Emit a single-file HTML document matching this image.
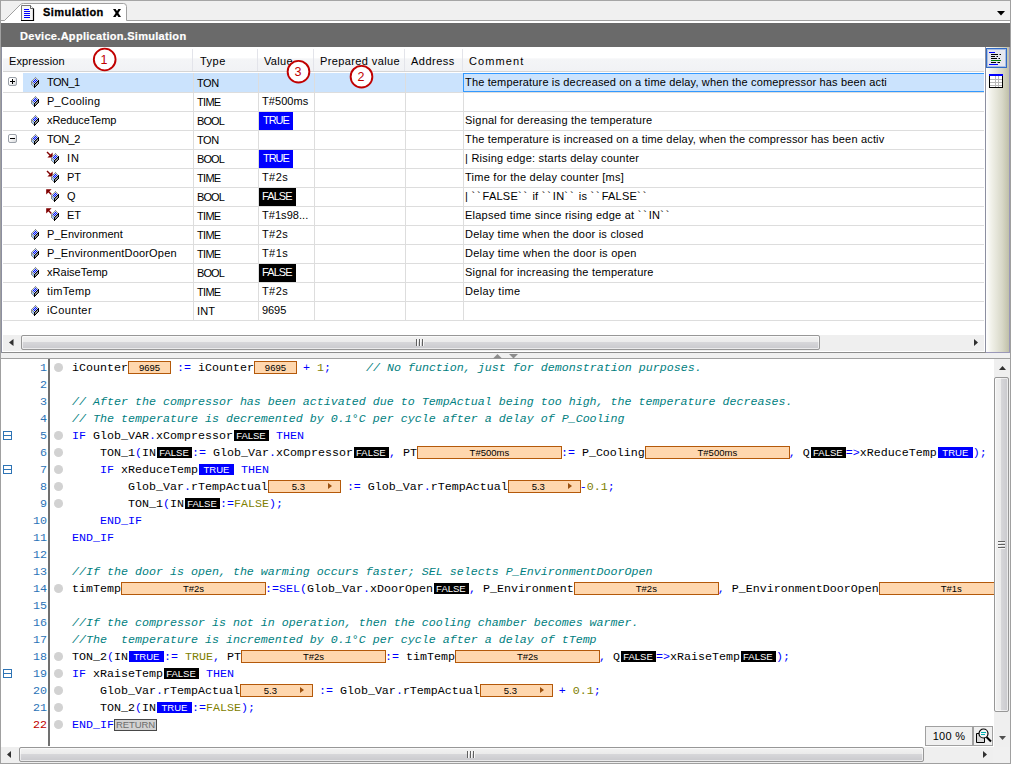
<!DOCTYPE html>
<html>
<head>
<meta charset="utf-8">
<title>Simulation</title>
<style>
html,body{margin:0;padding:0;}
body{width:1011px;height:764px;overflow:hidden;background:#fff;position:relative;font-family:"Liberation Sans",sans-serif;font-size:11px;color:#000;}
.a{position:absolute;}
#frame{position:absolute;left:0;top:0;width:1011px;height:764px;overflow:hidden;background:#fff;}
#tabstrip{left:0;top:0;width:1011px;height:21px;background:#f0f0f0;}
#topline{left:0;top:0;width:1011px;height:1px;background:#a5a5a5;}
#tabtext{left:43px;top:5px;font-weight:bold;font-size:11px;line-height:14px;white-space:nowrap;letter-spacing:0.45px;-webkit-text-stroke:0.3px #000;}
#whitegap{left:1px;top:21px;width:1010px;height:2px;background:#fff;}
#titlebar{left:1px;top:23px;width:1009px;height:24px;background:#6a6a6a;}
#titletext{left:20px;top:29px;color:#fff;font-weight:bold;font-size:11px;line-height:14px;white-space:nowrap;letter-spacing:0.3px;-webkit-text-stroke:0.2px #fff;}
#leftedge{left:0;top:0;width:1px;height:764px;background:#a0a0a0;}
#hdr{left:3px;top:49px;width:981px;height:22px;background:linear-gradient(#ffffff 0%,#ffffff 40%,#f4f5f7 45%,#f1f2f5 100%);}
#hdrline{left:3px;top:71px;width:981px;height:1px;background:#d5d5d5;}
.hsep{top:49px;width:1px;height:22px;background:#e3e4ea;}
.ht{top:54px;line-height:14px;font-size:11px;white-space:nowrap;color:#000;}
.rl{left:3px;width:981px;height:1px;background:#dddddd;}
.vl{top:73px;width:1px;height:248px;background:#dddddd;}
.t{line-height:14px;white-space:nowrap;font-size:11px;}
.vb{color:#fff;height:17px;line-height:17px;font-size:11px;text-align:left;padding-left:3px;box-sizing:border-box;white-space:nowrap;}
.tru{background:#0000ff;}
.fal{background:#000;}
.circ{width:23.6px;height:23.6px;box-sizing:border-box;border:1.9px solid #c00000;border-radius:50%;background:#fff;color:#c00000;font-size:12.5px;line-height:20.6px;text-align:center;text-indent:-1px;}
#code{left:0;top:359px;width:994px;height:387px;overflow:hidden;background:#fff;}
.ln{position:absolute;left:0;width:47px;text-align:right;font-family:"Liberation Mono",monospace;font-size:11.67px;line-height:17px;height:17px;color:#2b73b7;}
.cl{position:absolute;left:72px;white-space:pre;font-family:"Liberation Mono",monospace;font-size:11.67px;line-height:17px;height:17px;color:#000;}
.k{color:#0000ff;}
.c{color:#008080;font-style:italic;}
.n{color:#808000;}
.ib{display:inline-block;vertical-align:top;box-sizing:border-box;height:13px;margin-top:1px;margin-right:-1px;background:#ffd7ae;border:1px solid #b4590a;font-family:"Liberation Sans",sans-serif;font-size:9.5px;line-height:11px;text-align:center;color:#000;position:relative;font-style:normal;overflow:hidden;}
.ar{position:absolute;right:8px;top:2px;width:0;height:0;border-left:4.5px solid #9c4f0c;border-top:3.5px solid transparent;border-bottom:3.5px solid transparent;}
.bf,.bt{display:inline-block;vertical-align:top;box-sizing:border-box;height:11px;margin-top:2px;margin-left:1px;width:35px;font-family:"Liberation Sans",sans-serif;font-size:9.5px;line-height:12px;text-align:center;color:#fff;overflow:hidden;}
.bf{background:#000;text-indent:-1px;}
.bt{background:#0000ff;}
.rt{display:inline-block;vertical-align:top;box-sizing:border-box;height:12px;margin-top:2px;margin-right:-1px;width:43px;font-family:"Liberation Sans",sans-serif;font-size:9.5px;line-height:10px;text-align:center;color:#6c6c6c;background:#d2d2d2;border:1px solid #484848;overflow:hidden;letter-spacing:-0.1px;}
.dot{position:absolute;left:53.5px;width:9.5px;height:9px;border-radius:50%;background:#d2d2d2;}
.tri{position:absolute;width:0;height:0;}
</style>
</head>
<body>
<div id="frame">
<div class="a" id="tabstrip"></div><div class="a" id="topline"></div>
<div class="a" style="left:0;top:20px;width:1011px;height:1px;background:#a0a0a0"></div>
<svg class="a" style="left:0;top:0" width="140" height="22" viewBox="0 0 140 22"><path d="M1.5 20.5 L4.5 20.5 L20.5 4.5 Q21.5 3.5 23.5 3.5 L123.5 3.5 Q126.5 3.5 126.5 6.5 L126.5 21 L1.5 21 Z" fill="#ffffff"/><path d="M1 20.5 L4.5 20.5 L20.5 4.5 Q21.5 3.5 23.5 3.5 L123.5 3.5 Q126.5 3.5 126.5 6.5 L126.5 20.5" fill="none" stroke="#a0a0a0" stroke-width="1"/></svg>
<svg class="a" style="left:21px;top:5px" width="14" height="17" viewBox="0 0 14 17"><path d="M0.5 0.5 L9.5 0.5 L12.5 3.5 L12.5 15.5 L0.5 15.5 Z" fill="#f6f6f6" stroke="#6a6a6a" stroke-width="0.9"/><path d="M0 15.5 L13 15.5 M12.5 3.5 L12.5 16" stroke="#000" stroke-width="1.2"/><path d="M9.5 0.5 L9.5 3.5 L12.5 3.5" fill="#fff" stroke="#404040" stroke-width="0.8"/><path d="M3 4.5h5M3 6.5h6M3 8.5h6M3 10.5h6M3 12.5h6" stroke="#0000ff" stroke-width="1"/></svg>
<div class="a" id="tabtext">Simulation</div>
<svg class="a" style="left:113px;top:9px" width="8" height="8" viewBox="0 0 8 8"><path d="M0 0H2.6L8 8H5.4Z" fill="#000"/><path d="M8 0H5.4L0 8H2.6Z" fill="#000"/></svg>
<svg class="a" style="left:997px;top:11px" width="8" height="4.5" viewBox="0 0 8 4.5"><polygon points="0,0 8,0 4.0,4.5" fill="#000"/></svg>
<div class="a" id="whitegap"></div><div class="a" id="titlebar"></div><div class="a" id="titletext">Device.Application.Simulation</div>
<div class="a" id="hdr"></div><div class="a" id="hdrline"></div>
<div class="a hsep" style="left:192px"></div>
<div class="a hsep" style="left:257px"></div>
<div class="a hsep" style="left:313px"></div>
<div class="a hsep" style="left:404px"></div>
<div class="a hsep" style="left:462px"></div>
<div class="a ht" style="left:9px;letter-spacing:0.133px;">Expression</div>
<div class="a ht" style="left:200px;letter-spacing:0.467px;">Type</div>
<div class="a ht" style="left:264px;letter-spacing:0.3px;">Value</div>
<div class="a ht" style="left:320px;letter-spacing:0.385px;">Prepared value</div>
<div class="a ht" style="left:411px;letter-spacing:0.5px;">Address</div>
<div class="a ht" style="left:469px;letter-spacing:1.1px;">Comment</div>
<div class="a" style="left:23px;top:73px;width:961px;height:19px;background:#cbe3fd"></div>
<div class="a rl" style="top:92px"></div>
<div class="a rl" style="top:111px"></div>
<div class="a rl" style="top:130px"></div>
<div class="a rl" style="top:149px"></div>
<div class="a rl" style="top:168px"></div>
<div class="a rl" style="top:187px"></div>
<div class="a rl" style="top:206px"></div>
<div class="a rl" style="top:225px"></div>
<div class="a rl" style="top:244px"></div>
<div class="a rl" style="top:263px"></div>
<div class="a rl" style="top:282px"></div>
<div class="a rl" style="top:301px"></div>
<div class="a rl" style="top:320px"></div>
<div class="a vl" style="left:193px"></div>
<div class="a vl" style="left:258px"></div>
<div class="a vl" style="left:314px"></div>
<div class="a vl" style="left:405px"></div>
<div class="a vl" style="left:463px"></div>
<div class="a" style="left:463px;top:73px;width:521px;height:19px;box-sizing:border-box;border:1px solid #3399ff;border-right:none;background:#cbe3fd"></div>
<div class="a" style="left:8px;top:77px;width:9px;height:9px;box-sizing:border-box;border:1px solid #9aa0a8;border-radius:2px;background:linear-gradient(135deg,#fff 30%,#d8dadc)"></div><div class="a" style="left:10px;top:81px;width:5px;height:1px;background:#000"></div><div class="a" style="left:12px;top:79px;width:1px;height:5px;background:#000"></div>
<svg class="a" style="left:31px;top:77px" width="8" height="11" viewBox="0 0 8 11" shape-rendering="crispEdges"><path d="M4 0.5h1M3 1.5h1M5 1.5h1M2 2.5h1M6 2.5h1M1 3.5h1M0 4.5h1M0 5.5h2M0 6.5h1M2 6.5h1M0 7.5h1M1 8.5h1M2 9.5h1" stroke="#8e8e8e"/><path d="M4 1.5h1M3 2.5h1M5 2.5h1M2 3.5h1M4 3.5h1M6 3.5h1M1 4.5h1M3 4.5h1M5 4.5h1M2 5.5h1M4 5.5h1M3 6.5h1" stroke="#c4dcf4"/><path d="M4 2.5h1M3 3.5h1M5 3.5h1M2 4.5h1M4 4.5h1M3 5.5h1" stroke="#0000ff"/><path d="M7 3.5h1M6 4.5h2M5 5.5h1M7 5.5h1M4 6.5h1M7 6.5h1M3 7.5h1M6 7.5h1M3 8.5h1M5 8.5h1M3 9.5h2M3 10.5h1" stroke="#000000"/><path d="M1 6.5h1M1 7.5h2M2 8.5h1" stroke="#a6ccfc"/><path d="M6 5.5h1M5 6.5h2M4 7.5h2M4 8.5h1" stroke="#8c8c8c"/></svg>
<div class="a t" style="left:47px;top:75px;letter-spacing:-0.525px;">TON_1</div>
<div class="a t" style="left:197px;top:76px;letter-spacing:-0.4px;">TON</div>
<div class="a t" style="left:465px;top:75px;letter-spacing:0.156px;">The temperature is decreased on a time delay, when the comepressor has been acti</div>
<svg class="a" style="left:31px;top:96px" width="8" height="11" viewBox="0 0 8 11" shape-rendering="crispEdges"><path d="M4 0.5h1M3 1.5h1M5 1.5h1M2 2.5h1M6 2.5h1M1 3.5h1M0 4.5h1M0 5.5h2M0 6.5h1M2 6.5h1M0 7.5h1M1 8.5h1M2 9.5h1" stroke="#8e8e8e"/><path d="M4 1.5h1M3 2.5h1M5 2.5h1M2 3.5h1M4 3.5h1M6 3.5h1M1 4.5h1M3 4.5h1M5 4.5h1M2 5.5h1M4 5.5h1M3 6.5h1" stroke="#c4dcf4"/><path d="M4 2.5h1M3 3.5h1M5 3.5h1M2 4.5h1M4 4.5h1M3 5.5h1" stroke="#0000ff"/><path d="M7 3.5h1M6 4.5h2M5 5.5h1M7 5.5h1M4 6.5h1M7 6.5h1M3 7.5h1M6 7.5h1M3 8.5h1M5 8.5h1M3 9.5h2M3 10.5h1" stroke="#000000"/><path d="M1 6.5h1M1 7.5h2M2 8.5h1" stroke="#a6ccfc"/><path d="M6 5.5h1M5 6.5h2M4 7.5h2M4 8.5h1" stroke="#8c8c8c"/></svg>
<div class="a t" style="left:47px;top:94px;letter-spacing:0.288px;">P_Cooling</div>
<div class="a t" style="left:197px;top:95px;letter-spacing:-0.7px;">TIME</div>
<div class="a t" style="left:262px;top:94px;letter-spacing:0.067px;">T#500ms</div>
<svg class="a" style="left:31px;top:115px" width="8" height="11" viewBox="0 0 8 11" shape-rendering="crispEdges"><path d="M4 0.5h1M3 1.5h1M5 1.5h1M2 2.5h1M6 2.5h1M1 3.5h1M0 4.5h1M0 5.5h2M0 6.5h1M2 6.5h1M0 7.5h1M1 8.5h1M2 9.5h1" stroke="#8e8e8e"/><path d="M4 1.5h1M3 2.5h1M5 2.5h1M2 3.5h1M4 3.5h1M6 3.5h1M1 4.5h1M3 4.5h1M5 4.5h1M2 5.5h1M4 5.5h1M3 6.5h1" stroke="#c4dcf4"/><path d="M4 2.5h1M3 3.5h1M5 3.5h1M2 4.5h1M4 4.5h1M3 5.5h1" stroke="#0000ff"/><path d="M7 3.5h1M6 4.5h2M5 5.5h1M7 5.5h1M4 6.5h1M7 6.5h1M3 7.5h1M6 7.5h1M3 8.5h1M5 8.5h1M3 9.5h2M3 10.5h1" stroke="#000000"/><path d="M1 6.5h1M1 7.5h2M2 8.5h1" stroke="#a6ccfc"/><path d="M6 5.5h1M5 6.5h2M4 7.5h2M4 8.5h1" stroke="#8c8c8c"/></svg>
<div class="a t" style="left:47px;top:113px;letter-spacing:-0.1px;">xReduceTemp</div>
<div class="a t" style="left:197px;top:114px;letter-spacing:-0.9px;">BOOL</div>
<div class="a vb tru" style="left:259px;top:112px;width:34px;height:18px;line-height:17px;padding-left:4px;letter-spacing:-1.05px;">TRUE</div>
<div class="a t" style="left:465px;top:113px;letter-spacing:0.246px;">Signal for dereasing the temperature</div>
<div class="a" style="left:8px;top:134px;width:9px;height:9px;box-sizing:border-box;border:1px solid #9aa0a8;border-radius:2px;background:linear-gradient(135deg,#fff 30%,#d8dadc)"></div><div class="a" style="left:10px;top:138px;width:5px;height:1px;background:#000"></div>
<svg class="a" style="left:31px;top:134px" width="8" height="11" viewBox="0 0 8 11" shape-rendering="crispEdges"><path d="M4 0.5h1M3 1.5h1M5 1.5h1M2 2.5h1M6 2.5h1M1 3.5h1M0 4.5h1M0 5.5h2M0 6.5h1M2 6.5h1M0 7.5h1M1 8.5h1M2 9.5h1" stroke="#8e8e8e"/><path d="M4 1.5h1M3 2.5h1M5 2.5h1M2 3.5h1M4 3.5h1M6 3.5h1M1 4.5h1M3 4.5h1M5 4.5h1M2 5.5h1M4 5.5h1M3 6.5h1" stroke="#c4dcf4"/><path d="M4 2.5h1M3 3.5h1M5 3.5h1M2 4.5h1M4 4.5h1M3 5.5h1" stroke="#0000ff"/><path d="M7 3.5h1M6 4.5h2M5 5.5h1M7 5.5h1M4 6.5h1M7 6.5h1M3 7.5h1M6 7.5h1M3 8.5h1M5 8.5h1M3 9.5h2M3 10.5h1" stroke="#000000"/><path d="M1 6.5h1M1 7.5h2M2 8.5h1" stroke="#a6ccfc"/><path d="M6 5.5h1M5 6.5h2M4 7.5h2M4 8.5h1" stroke="#8c8c8c"/></svg>
<div class="a t" style="left:47px;top:132px;letter-spacing:-0.475px;">TON_2</div>
<div class="a t" style="left:197px;top:133px;letter-spacing:-0.4px;">TON</div>
<div class="a t" style="left:465px;top:132px;letter-spacing:0.178px;">The temperature is increased on a time delay, when the compressor has been activ</div>
<svg class="a" style="left:46px;top:149px" width="8" height="10" viewBox="0 0 8 10"><path d="M1 3 L5 7" stroke="#800000" stroke-width="1.4"/><path d="M6.6 3.4 L6.6 8.6 L1.4 8.6 Z" fill="#800000"/></svg>
<svg class="a" style="left:51px;top:153px" width="8" height="11" viewBox="0 0 8 11" shape-rendering="crispEdges"><path d="M4 0.5h1M3 1.5h1M5 1.5h1M2 2.5h1M6 2.5h1M1 3.5h1M0 4.5h1M0 5.5h2M0 6.5h1M2 6.5h1M0 7.5h1M1 8.5h1M2 9.5h1" stroke="#8e8e8e"/><path d="M4 1.5h1M3 2.5h1M5 2.5h1M2 3.5h1M4 3.5h1M6 3.5h1M1 4.5h1M3 4.5h1M5 4.5h1M2 5.5h1M4 5.5h1M3 6.5h1" stroke="#c4dcf4"/><path d="M4 2.5h1M3 3.5h1M5 3.5h1M2 4.5h1M4 4.5h1M3 5.5h1" stroke="#0000ff"/><path d="M7 3.5h1M6 4.5h2M5 5.5h1M7 5.5h1M4 6.5h1M7 6.5h1M3 7.5h1M6 7.5h1M3 8.5h1M5 8.5h1M3 9.5h2M3 10.5h1" stroke="#000000"/><path d="M1 6.5h1M1 7.5h2M2 8.5h1" stroke="#a6ccfc"/><path d="M6 5.5h1M5 6.5h2M4 7.5h2M4 8.5h1" stroke="#8c8c8c"/></svg>
<div class="a t" style="left:67px;top:151px;letter-spacing:1.0px;">IN</div>
<div class="a t" style="left:197px;top:152px;letter-spacing:-0.9px;">BOOL</div>
<div class="a vb tru" style="left:259px;top:150px;width:34px;height:18px;line-height:17px;padding-left:4px;letter-spacing:-1.05px;">TRUE</div>
<div class="a t" style="left:465px;top:151px;letter-spacing:0.232px;">| Rising edge: starts delay counter</div>
<svg class="a" style="left:46px;top:168px" width="8" height="10" viewBox="0 0 8 10"><path d="M1 3 L5 7" stroke="#800000" stroke-width="1.4"/><path d="M6.6 3.4 L6.6 8.6 L1.4 8.6 Z" fill="#800000"/></svg>
<svg class="a" style="left:51px;top:172px" width="8" height="11" viewBox="0 0 8 11" shape-rendering="crispEdges"><path d="M4 0.5h1M3 1.5h1M5 1.5h1M2 2.5h1M6 2.5h1M1 3.5h1M0 4.5h1M0 5.5h2M0 6.5h1M2 6.5h1M0 7.5h1M1 8.5h1M2 9.5h1" stroke="#8e8e8e"/><path d="M4 1.5h1M3 2.5h1M5 2.5h1M2 3.5h1M4 3.5h1M6 3.5h1M1 4.5h1M3 4.5h1M5 4.5h1M2 5.5h1M4 5.5h1M3 6.5h1" stroke="#c4dcf4"/><path d="M4 2.5h1M3 3.5h1M5 3.5h1M2 4.5h1M4 4.5h1M3 5.5h1" stroke="#0000ff"/><path d="M7 3.5h1M6 4.5h2M5 5.5h1M7 5.5h1M4 6.5h1M7 6.5h1M3 7.5h1M6 7.5h1M3 8.5h1M5 8.5h1M3 9.5h2M3 10.5h1" stroke="#000000"/><path d="M1 6.5h1M1 7.5h2M2 8.5h1" stroke="#a6ccfc"/><path d="M6 5.5h1M5 6.5h2M4 7.5h2M4 8.5h1" stroke="#8c8c8c"/></svg>
<div class="a t" style="left:67px;top:170px;">PT</div>
<div class="a t" style="left:197px;top:171px;letter-spacing:-0.7px;">TIME</div>
<div class="a t" style="left:262px;top:170px;letter-spacing:0.4px;">T#2s</div>
<div class="a t" style="left:465px;top:170px;letter-spacing:0.253px;">Time for the delay counter [ms]</div>
<svg class="a" style="left:46px;top:187px" width="8" height="10" viewBox="0 0 8 10"><path d="M2 4 L5.4 7.4" stroke="#800000" stroke-width="1.4"/><path d="M0.2 2.2 L5.6 2.2 L0.2 7.6 Z" fill="#800000"/></svg>
<svg class="a" style="left:51px;top:191px" width="8" height="11" viewBox="0 0 8 11" shape-rendering="crispEdges"><path d="M4 0.5h1M3 1.5h1M5 1.5h1M2 2.5h1M6 2.5h1M1 3.5h1M0 4.5h1M0 5.5h2M0 6.5h1M2 6.5h1M0 7.5h1M1 8.5h1M2 9.5h1" stroke="#8e8e8e"/><path d="M4 1.5h1M3 2.5h1M5 2.5h1M2 3.5h1M4 3.5h1M6 3.5h1M1 4.5h1M3 4.5h1M5 4.5h1M2 5.5h1M4 5.5h1M3 6.5h1" stroke="#c4dcf4"/><path d="M4 2.5h1M3 3.5h1M5 3.5h1M2 4.5h1M4 4.5h1M3 5.5h1" stroke="#0000ff"/><path d="M7 3.5h1M6 4.5h2M5 5.5h1M7 5.5h1M4 6.5h1M7 6.5h1M3 7.5h1M6 7.5h1M3 8.5h1M5 8.5h1M3 9.5h2M3 10.5h1" stroke="#000000"/><path d="M1 6.5h1M1 7.5h2M2 8.5h1" stroke="#a6ccfc"/><path d="M6 5.5h1M5 6.5h2M4 7.5h2M4 8.5h1" stroke="#8c8c8c"/></svg>
<div class="a t" style="left:67px;top:189px;">Q</div>
<div class="a t" style="left:197px;top:190px;letter-spacing:-0.9px;">BOOL</div>
<div class="a vb fal" style="left:259px;top:188px;width:37px;height:18px;line-height:17px;padding-left:3px;letter-spacing:-0.9px;">FALSE</div>
<div class="a t" style="left:465px;top:189px;letter-spacing:0.24px;">| <span style="letter-spacing:1.9px">``</span>FALSE<span style="letter-spacing:1.9px">``</span> if <span style="letter-spacing:1.9px">``</span>IN<span style="letter-spacing:1.9px">``</span> is <span style="letter-spacing:1.9px">``</span>FALSE<span style="letter-spacing:1.9px">``</span></div>
<svg class="a" style="left:46px;top:206px" width="8" height="10" viewBox="0 0 8 10"><path d="M2 4 L5.4 7.4" stroke="#800000" stroke-width="1.4"/><path d="M0.2 2.2 L5.6 2.2 L0.2 7.6 Z" fill="#800000"/></svg>
<svg class="a" style="left:51px;top:210px" width="8" height="11" viewBox="0 0 8 11" shape-rendering="crispEdges"><path d="M4 0.5h1M3 1.5h1M5 1.5h1M2 2.5h1M6 2.5h1M1 3.5h1M0 4.5h1M0 5.5h2M0 6.5h1M2 6.5h1M0 7.5h1M1 8.5h1M2 9.5h1" stroke="#8e8e8e"/><path d="M4 1.5h1M3 2.5h1M5 2.5h1M2 3.5h1M4 3.5h1M6 3.5h1M1 4.5h1M3 4.5h1M5 4.5h1M2 5.5h1M4 5.5h1M3 6.5h1" stroke="#c4dcf4"/><path d="M4 2.5h1M3 3.5h1M5 3.5h1M2 4.5h1M4 4.5h1M3 5.5h1" stroke="#0000ff"/><path d="M7 3.5h1M6 4.5h2M5 5.5h1M7 5.5h1M4 6.5h1M7 6.5h1M3 7.5h1M6 7.5h1M3 8.5h1M5 8.5h1M3 9.5h2M3 10.5h1" stroke="#000000"/><path d="M1 6.5h1M1 7.5h2M2 8.5h1" stroke="#a6ccfc"/><path d="M6 5.5h1M5 6.5h2M4 7.5h2M4 8.5h1" stroke="#8c8c8c"/></svg>
<div class="a t" style="left:67px;top:208px;">ET</div>
<div class="a t" style="left:197px;top:209px;letter-spacing:-0.7px;">TIME</div>
<div class="a t" style="left:262px;top:208px;letter-spacing:0.05px;">T#1s98...</div>
<div class="a t" style="left:465px;top:208px;letter-spacing:0.24px;">Elapsed time since rising edge at <span style="letter-spacing:1.9px">``</span>IN<span style="letter-spacing:1.9px">``</span></div>
<svg class="a" style="left:31px;top:229px" width="8" height="11" viewBox="0 0 8 11" shape-rendering="crispEdges"><path d="M4 0.5h1M3 1.5h1M5 1.5h1M2 2.5h1M6 2.5h1M1 3.5h1M0 4.5h1M0 5.5h2M0 6.5h1M2 6.5h1M0 7.5h1M1 8.5h1M2 9.5h1" stroke="#8e8e8e"/><path d="M4 1.5h1M3 2.5h1M5 2.5h1M2 3.5h1M4 3.5h1M6 3.5h1M1 4.5h1M3 4.5h1M5 4.5h1M2 5.5h1M4 5.5h1M3 6.5h1" stroke="#c4dcf4"/><path d="M4 2.5h1M3 3.5h1M5 3.5h1M2 4.5h1M4 4.5h1M3 5.5h1" stroke="#0000ff"/><path d="M7 3.5h1M6 4.5h2M5 5.5h1M7 5.5h1M4 6.5h1M7 6.5h1M3 7.5h1M6 7.5h1M3 8.5h1M5 8.5h1M3 9.5h2M3 10.5h1" stroke="#000000"/><path d="M1 6.5h1M1 7.5h2M2 8.5h1" stroke="#a6ccfc"/><path d="M6 5.5h1M5 6.5h2M4 7.5h2M4 8.5h1" stroke="#8c8c8c"/></svg>
<div class="a t" style="left:47px;top:227px;letter-spacing:0.05px;">P_Environment</div>
<div class="a t" style="left:197px;top:228px;letter-spacing:-0.7px;">TIME</div>
<div class="a t" style="left:262px;top:227px;letter-spacing:0.4px;">T#2s</div>
<div class="a t" style="left:465px;top:227px;letter-spacing:0.236px;">Delay time when the door is closed</div>
<svg class="a" style="left:31px;top:248px" width="8" height="11" viewBox="0 0 8 11" shape-rendering="crispEdges"><path d="M4 0.5h1M3 1.5h1M5 1.5h1M2 2.5h1M6 2.5h1M1 3.5h1M0 4.5h1M0 5.5h2M0 6.5h1M2 6.5h1M0 7.5h1M1 8.5h1M2 9.5h1" stroke="#8e8e8e"/><path d="M4 1.5h1M3 2.5h1M5 2.5h1M2 3.5h1M4 3.5h1M6 3.5h1M1 4.5h1M3 4.5h1M5 4.5h1M2 5.5h1M4 5.5h1M3 6.5h1" stroke="#c4dcf4"/><path d="M4 2.5h1M3 3.5h1M5 3.5h1M2 4.5h1M4 4.5h1M3 5.5h1" stroke="#0000ff"/><path d="M7 3.5h1M6 4.5h2M5 5.5h1M7 5.5h1M4 6.5h1M7 6.5h1M3 7.5h1M6 7.5h1M3 8.5h1M5 8.5h1M3 9.5h2M3 10.5h1" stroke="#000000"/><path d="M1 6.5h1M1 7.5h2M2 8.5h1" stroke="#a6ccfc"/><path d="M6 5.5h1M5 6.5h2M4 7.5h2M4 8.5h1" stroke="#8c8c8c"/></svg>
<div class="a t" style="left:47px;top:246px;letter-spacing:0.18px;">P_EnvironmentDoorOpen</div>
<div class="a t" style="left:197px;top:247px;letter-spacing:-0.7px;">TIME</div>
<div class="a t" style="left:262px;top:246px;letter-spacing:0.4px;">T#1s</div>
<div class="a t" style="left:465px;top:246px;letter-spacing:0.265px;">Delay time when the door is open</div>
<svg class="a" style="left:31px;top:267px" width="8" height="11" viewBox="0 0 8 11" shape-rendering="crispEdges"><path d="M4 0.5h1M3 1.5h1M5 1.5h1M2 2.5h1M6 2.5h1M1 3.5h1M0 4.5h1M0 5.5h2M0 6.5h1M2 6.5h1M0 7.5h1M1 8.5h1M2 9.5h1" stroke="#8e8e8e"/><path d="M4 1.5h1M3 2.5h1M5 2.5h1M2 3.5h1M4 3.5h1M6 3.5h1M1 4.5h1M3 4.5h1M5 4.5h1M2 5.5h1M4 5.5h1M3 6.5h1" stroke="#c4dcf4"/><path d="M4 2.5h1M3 3.5h1M5 3.5h1M2 4.5h1M4 4.5h1M3 5.5h1" stroke="#0000ff"/><path d="M7 3.5h1M6 4.5h2M5 5.5h1M7 5.5h1M4 6.5h1M7 6.5h1M3 7.5h1M6 7.5h1M3 8.5h1M5 8.5h1M3 9.5h2M3 10.5h1" stroke="#000000"/><path d="M1 6.5h1M1 7.5h2M2 8.5h1" stroke="#a6ccfc"/><path d="M6 5.5h1M5 6.5h2M4 7.5h2M4 8.5h1" stroke="#8c8c8c"/></svg>
<div class="a t" style="left:47px;top:265px;letter-spacing:0.022px;">xRaiseTemp</div>
<div class="a t" style="left:197px;top:266px;letter-spacing:-0.9px;">BOOL</div>
<div class="a vb fal" style="left:259px;top:264px;width:37px;height:18px;line-height:17px;padding-left:3px;letter-spacing:-0.9px;">FALSE</div>
<div class="a t" style="left:465px;top:265px;letter-spacing:0.225px;">Signal for increasing the temperature</div>
<svg class="a" style="left:31px;top:286px" width="8" height="11" viewBox="0 0 8 11" shape-rendering="crispEdges"><path d="M4 0.5h1M3 1.5h1M5 1.5h1M2 2.5h1M6 2.5h1M1 3.5h1M0 4.5h1M0 5.5h2M0 6.5h1M2 6.5h1M0 7.5h1M1 8.5h1M2 9.5h1" stroke="#8e8e8e"/><path d="M4 1.5h1M3 2.5h1M5 2.5h1M2 3.5h1M4 3.5h1M6 3.5h1M1 4.5h1M3 4.5h1M5 4.5h1M2 5.5h1M4 5.5h1M3 6.5h1" stroke="#c4dcf4"/><path d="M4 2.5h1M3 3.5h1M5 3.5h1M2 4.5h1M4 4.5h1M3 5.5h1" stroke="#0000ff"/><path d="M7 3.5h1M6 4.5h2M5 5.5h1M7 5.5h1M4 6.5h1M7 6.5h1M3 7.5h1M6 7.5h1M3 8.5h1M5 8.5h1M3 9.5h2M3 10.5h1" stroke="#000000"/><path d="M1 6.5h1M1 7.5h2M2 8.5h1" stroke="#a6ccfc"/><path d="M6 5.5h1M5 6.5h2M4 7.5h2M4 8.5h1" stroke="#8c8c8c"/></svg>
<div class="a t" style="left:47px;top:284px;letter-spacing:0.333px;">timTemp</div>
<div class="a t" style="left:197px;top:285px;letter-spacing:-0.7px;">TIME</div>
<div class="a t" style="left:262px;top:284px;letter-spacing:0.4px;">T#2s</div>
<div class="a t" style="left:465px;top:284px;letter-spacing:0.344px;">Delay time</div>
<svg class="a" style="left:31px;top:305px" width="8" height="11" viewBox="0 0 8 11" shape-rendering="crispEdges"><path d="M4 0.5h1M3 1.5h1M5 1.5h1M2 2.5h1M6 2.5h1M1 3.5h1M0 4.5h1M0 5.5h2M0 6.5h1M2 6.5h1M0 7.5h1M1 8.5h1M2 9.5h1" stroke="#8e8e8e"/><path d="M4 1.5h1M3 2.5h1M5 2.5h1M2 3.5h1M4 3.5h1M6 3.5h1M1 4.5h1M3 4.5h1M5 4.5h1M2 5.5h1M4 5.5h1M3 6.5h1" stroke="#c4dcf4"/><path d="M4 2.5h1M3 3.5h1M5 3.5h1M2 4.5h1M4 4.5h1M3 5.5h1" stroke="#0000ff"/><path d="M7 3.5h1M6 4.5h2M5 5.5h1M7 5.5h1M4 6.5h1M7 6.5h1M3 7.5h1M6 7.5h1M3 8.5h1M5 8.5h1M3 9.5h2M3 10.5h1" stroke="#000000"/><path d="M1 6.5h1M1 7.5h2M2 8.5h1" stroke="#a6ccfc"/><path d="M6 5.5h1M5 6.5h2M4 7.5h2M4 8.5h1" stroke="#8c8c8c"/></svg>
<div class="a t" style="left:47px;top:303px;letter-spacing:0.429px;">iCounter</div>
<div class="a t" style="left:197px;top:304px;letter-spacing:0.1px;">INT</div>
<div class="a t" style="left:262px;top:303px;letter-spacing:-0.067px;">9695</div>
<svg class="a" style="left:90px;top:45px" width="30" height="30" viewBox="0 0 30 30"><circle cx="14.7" cy="14.5" r="10.85" fill="#fff" stroke="#c00000" stroke-width="1.9"/><text x="14.1" y="18.9" text-anchor="middle" font-family="Liberation Sans, sans-serif" font-size="12.5" fill="#c00000">1</text></svg>
<svg class="a" style="left:347px;top:62px" width="30" height="30" viewBox="0 0 30 30"><circle cx="14.5" cy="14.7" r="10.85" fill="#fff" stroke="#c00000" stroke-width="1.9"/><text x="13.9" y="19.1" text-anchor="middle" font-family="Liberation Sans, sans-serif" font-size="12.5" fill="#c00000">2</text></svg>
<svg class="a" style="left:284px;top:57px" width="30" height="30" viewBox="0 0 30 30"><circle cx="14.5" cy="14.7" r="10.85" fill="#fff" stroke="#c00000" stroke-width="1.9"/><text x="13.9" y="19.1" text-anchor="middle" font-family="Liberation Sans, sans-serif" font-size="12.5" fill="#c00000">3</text></svg>
<div class="a" style="left:985px;top:47px;width:1px;height:306px;background:#8c8fa0"></div>
<div class="a" style="left:1px;top:47px;width:1px;height:306px;background:#8c8fa0"></div>
<div class="a" style="left:986px;top:47px;width:23px;height:305px;background:linear-gradient(90deg,#ffffff 0%,#f0f0e8 25%,#d8d8c8 70%,#c0c0a8 100%)"></div>
<div class="a" style="left:1009px;top:47px;width:1px;height:306px;background:#9a98b8"></div>
<div class="a" style="left:986px;top:352px;width:24px;height:1px;background:#9a98b8"></div>
<div class="a" style="left:986px;top:48px;width:21px;height:20px;box-sizing:border-box;border:1px solid #316ac5;background:#e6e7ef;box-shadow:inset 0 0 0 1px rgba(90,138,216,.45)"></div>
<svg class="a" style="left:988px;top:50px" width="16" height="16" viewBox="0 0 16 16"><path d="M1 2.5h6" stroke="#0000ff" stroke-width="1"/><path d="M3 4.5h7M11.5 4.5h1.5" stroke="#000" stroke-width="1"/><path d="M3 6.5h4M8.5 6.5h1.5" stroke="#000" stroke-width="1"/><path d="M3 8.5h6M10.5 8.5h1.5" stroke="#000" stroke-width="1"/><path d="M3 10.5h10" stroke="#008000" stroke-width="1"/><path d="M3 12.5h5M9.5 12.5h2.5" stroke="#000" stroke-width="1"/><path d="M1 14.5h9" stroke="#0000ff" stroke-width="1"/></svg>
<svg class="a" style="left:989px;top:74px" width="14" height="14" viewBox="0 0 14 14"><rect x="0.5" y="0.5" width="13" height="13" fill="#fff" stroke="#000" stroke-width="1"/><rect x="0" y="0" width="14" height="2" fill="#0000ff"/><path d="M1 5.5h12M1 8.5h12M1 11.5h12M6.5 2v11M9.5 2v11" stroke="#b8b8b8" stroke-width="1"/></svg>
<div class="a" style="left:3px;top:335px;width:981px;height:16px;background:#efefef"></div>
<svg class="a" style="left:9px;top:339px" width="4.5" height="7" viewBox="0 0 4.5 7"><polygon points="4.5,0 4.5,7 0,3.5" fill="#303030"/></svg>
<svg class="a" style="left:974px;top:339px" width="4" height="7" viewBox="0 0 4 7"><polygon points="0,0 0,7 4,3.5" fill="#303030"/></svg>
<div class="a" style="left:21px;top:335px;width:799px;height:15px;box-sizing:border-box;border:1px solid #979797;border-radius:2px;background:linear-gradient(#f2f2f2 0%,#ebebeb 45%,#d6d6d9 50%,#c9c9cd 100%);box-shadow:inset 0 0 0 1px rgba(255,255,255,.6)"></div><div class="a" style="left:416px;top:339px;width:1px;height:7px;background:#606060"></div><div class="a" style="left:417px;top:339px;width:1px;height:7px;background:#f8f8f8"></div><div class="a" style="left:419px;top:339px;width:1px;height:7px;background:#606060"></div><div class="a" style="left:420px;top:339px;width:1px;height:7px;background:#f8f8f8"></div><div class="a" style="left:422px;top:339px;width:1px;height:7px;background:#606060"></div><div class="a" style="left:423px;top:339px;width:1px;height:7px;background:#f8f8f8"></div>
<div class="a" style="left:2px;top:352px;width:984px;height:1px;background:#8c8c8c"></div>
<div class="a" style="left:0;top:353px;width:1011px;height:5px;background:#f0f0f0"></div>
<div class="a" style="left:0;top:358px;width:1010px;height:1px;background:#a0a0a0"></div>
<svg class="a" style="left:493px;top:354px" width="9" height="4.5" viewBox="0 0 9 4.5"><polygon points="0,4.5 9,4.5 4.5,0" fill="#8c8c8c"/></svg>
<svg class="a" style="left:509px;top:354px" width="9" height="4.5" viewBox="0 0 9 4.5"><polygon points="0,0 9,0 4.5,4.5" fill="#8c8c8c"/></svg>
<div class="a" id="code">
<div class="a" style="left:0;top:0;width:1px;height:387px;background:#a0a0a0"></div>
<div class="a" style="left:48px;top:0;width:2px;height:387px;background:#707070"></div>
<div class="ln" style="top:1px">1</div>
<div class="dot" style="top:4px"></div>
<div class="cl" style="top:1px">iCounter<span class="ib" style="width:43px">9695</span> <span class="k">:=</span> iCounter<span class="ib" style="width:43px">9695</span> <span class="k">+</span> <span class="n">1</span><span class="k">;</span>     <span class="c">// No function, just for demonstration purposes.</span></div>
<div class="ln" style="top:18px">2</div>
<div class="ln" style="top:35px">3</div>
<div class="cl" style="top:35px"><span class="c">// After the compressor has been activated due to TempActual being too high, the temperature decreases.</span></div>
<div class="ln" style="top:52px">4</div>
<div class="cl" style="top:52px"><span class="c">// The temperature is decremented by 0.1°C per cycle after a delay of P_Cooling</span></div>
<div class="ln" style="top:69px">5</div>
<div class="dot" style="top:72px"></div>
<div class="a" style="left:3px;top:72px;width:9px;height:9px;box-sizing:border-box;border:1px solid #2e74b5"></div><div class="a" style="left:4px;top:76px;width:7px;height:1px;background:#2e74b5"></div>
<div class="cl" style="top:69px"><span class="k">IF</span> Glob_VAR<span class="k">.</span>xCompressor<span class="bf">FALSE</span> <span class="k">THEN</span></div>
<div class="ln" style="top:86px">6</div>
<div class="dot" style="top:89px"></div>
<div class="cl" style="top:86px">    TON_1<span class="k">(</span>IN<span class="bf">FALSE</span><span class="k">:=</span> Glob_Var<span class="k">.</span>xCompressor<span class="bf">FALSE</span><span class="k">,</span> PT<span class="ib" style="width:145px">T#500ms</span><span class="k">:=</span> P_Cooling<span class="ib" style="width:145px">T#500ms</span><span class="k">,</span> Q<span class="bf">FALSE</span><span class="k">=&gt;</span>xReduceTemp<span class="bt">TRUE</span><span class="k">)</span><span class="k">;</span></div>
<div class="ln" style="top:103px">7</div>
<div class="dot" style="top:106px"></div>
<div class="a" style="left:3px;top:106px;width:9px;height:9px;box-sizing:border-box;border:1px solid #2e74b5"></div><div class="a" style="left:4px;top:110px;width:7px;height:1px;background:#2e74b5"></div>
<div class="cl" style="top:103px">    <span class="k">IF</span> xReduceTemp<span class="bt">TRUE</span> <span class="k">THEN</span></div>
<div class="ln" style="top:120px">8</div>
<div class="dot" style="top:123px"></div>
<div class="cl" style="top:120px">        Glob_Var<span class="k">.</span>rTempActual<span class="ib" style="width:73px;padding-right:12px">5.3<i class="ar"></i></span> <span class="k">:=</span> Glob_Var<span class="k">.</span>rTempActual<span class="ib" style="width:73px;padding-right:12px">5.3<i class="ar"></i></span><span class="k">-</span><span class="n">0.1</span><span class="k">;</span></div>
<div class="ln" style="top:137px">9</div>
<div class="dot" style="top:140px"></div>
<div class="cl" style="top:137px">        TON_1<span class="k">(</span>IN<span class="bf">FALSE</span><span class="k">:=</span><span class="n">FALSE</span><span class="k">)</span><span class="k">;</span></div>
<div class="ln" style="top:154px">10</div>
<div class="cl" style="top:154px">    <span class="k">END_IF</span></div>
<div class="ln" style="top:171px">11</div>
<div class="cl" style="top:171px"><span class="k">END_IF</span></div>
<div class="ln" style="top:188px">12</div>
<div class="ln" style="top:205px">13</div>
<div class="cl" style="top:205px"><span class="c">//If the door is open, the warming occurs faster; SEL selects P_EnvironmentDoorOpen</span></div>
<div class="ln" style="top:222px">14</div>
<div class="dot" style="top:225px"></div>
<div class="cl" style="top:222px">timTemp<span class="ib" style="width:145px">T#2s</span><span class="k">:=</span><span class="k">SEL</span><span class="k">(</span>Glob_Var<span class="k">.</span>xDoorOpen<span class="bf">FALSE</span><span class="k">,</span> P_Environment<span class="ib" style="width:145px">T#2s</span><span class="k">,</span> P_EnvironmentDoorOpen<span class="ib" style="width:145px">T#1s</span></div>
<div class="ln" style="top:239px">15</div>
<div class="ln" style="top:256px">16</div>
<div class="cl" style="top:256px"><span class="c">//If the compressor is not in operation, then the cooling chamber becomes warmer.</span></div>
<div class="ln" style="top:273px">17</div>
<div class="cl" style="top:273px"><span class="c">//The  temperature is incremented by 0.1°C per cycle after a delay of tTemp</span></div>
<div class="ln" style="top:290px">18</div>
<div class="dot" style="top:293px"></div>
<div class="cl" style="top:290px">TON_2<span class="k">(</span>IN<span class="bt">TRUE</span><span class="k">:=</span> <span class="n">TRUE</span><span class="k">,</span> PT<span class="ib" style="width:145px">T#2s</span><span class="k">:=</span> timTemp<span class="ib" style="width:145px">T#2s</span><span class="k">,</span> Q<span class="bf">FALSE</span><span class="k">=&gt;</span>xRaiseTemp<span class="bf">FALSE</span><span class="k">)</span><span class="k">;</span></div>
<div class="ln" style="top:307px">19</div>
<div class="dot" style="top:310px"></div>
<div class="a" style="left:3px;top:310px;width:9px;height:9px;box-sizing:border-box;border:1px solid #2e74b5"></div><div class="a" style="left:4px;top:314px;width:7px;height:1px;background:#2e74b5"></div>
<div class="cl" style="top:307px"><span class="k">IF</span> xRaiseTemp<span class="bf">FALSE</span> <span class="k">THEN</span></div>
<div class="ln" style="top:324px">20</div>
<div class="dot" style="top:327px"></div>
<div class="cl" style="top:324px">    Glob_Var<span class="k">.</span>rTempActual<span class="ib" style="width:73px;padding-right:12px">5.3<i class="ar"></i></span> <span class="k">:=</span> Glob_Var<span class="k">.</span>rTempActual<span class="ib" style="width:73px;padding-right:12px">5.3<i class="ar"></i></span> <span class="k">+</span> <span class="n">0.1</span><span class="k">;</span></div>
<div class="ln" style="top:341px">21</div>
<div class="dot" style="top:344px"></div>
<div class="cl" style="top:341px">    TON_2<span class="k">(</span>IN<span class="bt">TRUE</span><span class="k">:=</span><span class="n">FALSE</span><span class="k">)</span><span class="k">;</span></div>
<div class="ln" style="top:358px;color:#c00000">22</div>
<div class="dot" style="top:361px"></div>
<div class="cl" style="top:358px"><span class="k">END_IF</span><span class="rt">RETURN</span></div>
</div>
<div class="a" style="left:994px;top:359px;width:16px;height:388px;background:#efefef"></div>
<svg class="a" style="left:999px;top:366px" width="7" height="4" viewBox="0 0 7 4"><polygon points="0,4 7,4 3.5,0" fill="#303030"/></svg>
<svg class="a" style="left:999px;top:736px" width="7" height="4" viewBox="0 0 7 4"><polygon points="0,0 7,0 3.5,4" fill="#505050"/></svg>
<div class="a" style="left:994px;top:377px;width:15px;height:335px;box-sizing:border-box;border:1px solid #979797;border-radius:2px;background:linear-gradient(90deg,#f2f2f2 0%,#ebebeb 45%,#d6d6d9 50%,#c9c9cd 100%);box-shadow:inset 0 0 0 1px rgba(255,255,255,.6)"></div><div class="a" style="left:998px;top:541px;width:7px;height:1px;background:#606060"></div><div class="a" style="left:998px;top:542px;width:7px;height:1px;background:#f8f8f8"></div><div class="a" style="left:998px;top:544px;width:7px;height:1px;background:#606060"></div><div class="a" style="left:998px;top:545px;width:7px;height:1px;background:#f8f8f8"></div><div class="a" style="left:998px;top:547px;width:7px;height:1px;background:#606060"></div><div class="a" style="left:998px;top:548px;width:7px;height:1px;background:#f8f8f8"></div>
<div class="a" style="left:1px;top:747px;width:992px;height:16px;background:#efefef"></div>
<div class="a" style="left:993px;top:747px;width:17px;height:16px;background:#f0f0f0"></div>
<svg class="a" style="left:7px;top:751px" width="4" height="7" viewBox="0 0 4 7"><polygon points="4,0 4,7 0,3.5" fill="#303030"/></svg>
<svg class="a" style="left:983px;top:751px" width="4" height="7" viewBox="0 0 4 7"><polygon points="0,0 0,7 4,3.5" fill="#303030"/></svg>
<div class="a" style="left:19px;top:747px;width:905px;height:15px;box-sizing:border-box;border:1px solid #979797;border-radius:2px;background:linear-gradient(#f2f2f2 0%,#ebebeb 45%,#d6d6d9 50%,#c9c9cd 100%);box-shadow:inset 0 0 0 1px rgba(255,255,255,.6)"></div><div class="a" style="left:467px;top:751px;width:1px;height:7px;background:#606060"></div><div class="a" style="left:468px;top:751px;width:1px;height:7px;background:#f8f8f8"></div><div class="a" style="left:470px;top:751px;width:1px;height:7px;background:#606060"></div><div class="a" style="left:471px;top:751px;width:1px;height:7px;background:#f8f8f8"></div><div class="a" style="left:473px;top:751px;width:1px;height:7px;background:#606060"></div><div class="a" style="left:474px;top:751px;width:1px;height:7px;background:#f8f8f8"></div>
<div class="a" style="left:925px;top:726px;width:48px;height:20px;box-sizing:border-box;border:1px solid #a0a0a0;background:#f0f0f0;text-align:center;font-size:11px;line-height:18px;letter-spacing:0.3px">100 %</div>
<div class="a" style="left:973px;top:726px;width:20px;height:20px;box-sizing:border-box;border:1px solid #a0a0a0;background:#f0f0f0"></div>
<svg class="a" style="left:975px;top:728px" width="17" height="16" viewBox="0 0 17 16"><path d="M1.5 5.5 L1.5 14.5 L9.5 14.5 L9.5 9" fill="#d8d8d8" stroke="#000" stroke-width="1"/><path d="M1.5 5.5 L4 5.5" stroke="#000"/><circle cx="8.5" cy="5.5" r="4.5" fill="#f4f4f4" stroke="#000" stroke-width="1.2"/><path d="M6 4.5h5M6 6.5h4" stroke="#00b0b0" stroke-width="1"/><path d="M11.5 9 L16 13.5" stroke="#000" stroke-width="2"/></svg>
<div class="a" style="left:1010px;top:0;width:1px;height:764px;background:#a0a0a0"></div>
<div class="a" style="left:0;top:763px;width:1011px;height:1px;background:#a0a0a0"></div>
<div class="a" style="left:0;top:359px;width:1px;height:405px;background:#a0a0a0"></div>
<div class="a" id="leftedge"></div>
</div>
</body>
</html>
